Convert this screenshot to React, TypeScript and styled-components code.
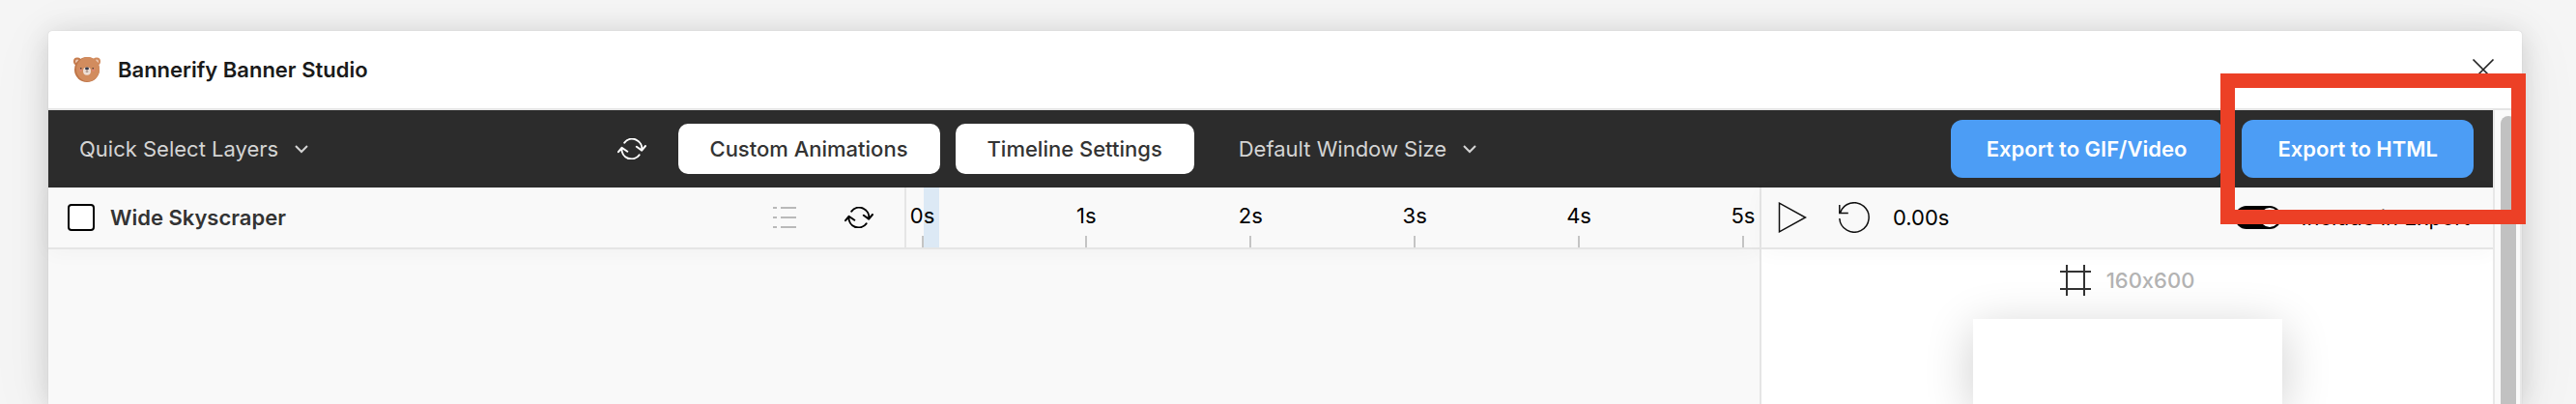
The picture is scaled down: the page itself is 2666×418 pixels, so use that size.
import React from "react";
import styled, { createGlobalStyle, css } from "styled-components";

const GlobalStyle = createGlobalStyle`
  *, *::before, *::after { box-sizing: border-box; }
  body {
    margin: 0;
    background: #f5f5f5;
    color: #000;
    font: 400 22px/32px Inter, "Liberation Sans", sans-serif;
    font-feature-settings: "calt" 0;
    overflow: hidden;
  }
  button, input, select { font: inherit; font-feature-settings: inherit; color: inherit; margin: 0; }
`;

const Page = styled.div`
  min-height: 100vh;
  padding: 32px 56px 0 50px;
  display: flex;
`;

const Window = styled.main`
  position: relative;
  flex: 1;
  min-width: 0;
  display: flex;
  flex-direction: column;
  background: #fff;
  border-radius: 4px 4px 0 0;
  box-shadow: 0 0 1px rgba(0, 0, 0, 0.2), 0 4px 30px rgba(0, 0, 0, 0.15),
    0 10px 70px rgba(0, 0, 0, 0.06);
`;

const TitleBar = styled.header`
  display: flex;
  align-items: center;
  gap: 18px;
  height: 82px;
  padding: 0 20px 0 26px;
  border-bottom: 2px solid #e5e5e5;
`;

const Title = styled.h1`
  flex: 1;
  margin: 0;
  font-size: 22px;
  font-weight: 600;
  color: #1a1a1a;
`;

const IconButton = styled.button`
  display: inline-flex;
  align-items: center;
  justify-content: center;
  width: 40px;
  height: 40px;
  padding: 0;
  border: 0;
  background: none;
  cursor: pointer;
  svg { flex: none; }
`;

const Content = styled.div`
  flex: 1;
  display: flex;
`;

const Studio = styled.div`
  flex: 1;
  min-width: 0;
  display: flex;
  flex-direction: column;
`;

const Scrollbar = styled.div`
  width: 30px;
  padding: 6px 4px 0 6px;
  border: solid #e8e8e8;
  border-width: 0 2px;
  background: #fafafa;
  display: flex;
`;

const ScrollThumb = styled.div`
  width: 16px;
  border-radius: 8px 8px 0 0;
  background: #c1c1c1;
`;

const Toolbar = styled.div`
  display: flex;
  align-items: center;
  height: 80px;
  padding-right: 20px;
  background: #2c2c2c;
  color: #d4d4d4;
`;

const LayerTools = styled.div`
  flex: 0 0 25%;
  display: flex;
  align-items: center;
  justify-content: space-between;
  padding: 0 4px 0 32px;
  color: #fff;
`;

const ButtonGroup = styled.div<{ $gap: number }>`
  display: flex;
  gap: ${(p) => p.$gap}px;
`;

const CenterTools = styled.div`
  flex: 1;
  display: flex;
  align-items: center;
  gap: 46px;
  padding-left: 24px;
`;

const ToolButton = styled.button<{ $primary?: boolean }>`
  border: 0;
  white-space: nowrap;
  cursor: pointer;
  ${(p) =>
    p.$primary
      ? css`
          height: 60px;
          padding: 0 37px;
          border-radius: 12px;
          background: #4c9df5;
          color: #fff;
          font-weight: 600;
        `
      : css`
          height: 52px;
          padding: 0 33px;
          border-radius: 10px;
          background: #fff;
          color: #333;
          font-weight: 500;
        `}
`;

const DropdownWrap = styled.label`
  display: flex;
  align-items: center;
  color: #d4d4d4;
  svg { margin-left: -14px; pointer-events: none; }
`;

const DropdownSelect = styled.select`
  appearance: none;
  border: 0;
  padding: 0 30px 0 0;
  background: none;
  cursor: pointer;
`;

const Spacer = styled.div`
  flex: 1;
`;

const Columns = styled.div`
  flex: 1;
  display: grid;
  grid-template-columns: 7fr 3fr;
`;

const Panel = styled.section<{ $preview?: boolean }>`
  display: flex;
  flex-direction: column;
  background: ${(p) => (p.$preview ? "#fff" : "#f9f9f9")};
  border-left: ${(p) => (p.$preview ? "2px solid #e5e5e5" : "0")};
`;

const PanelHead = styled.div<{ $columns: string }>`
  display: grid;
  grid-template-columns: ${(p) => p.$columns};
  height: 64px;
  background: #f9f9f9;
  border-bottom: 2px solid #e5e5e5;
  box-shadow: 0 4px 20px rgba(0, 0, 0, 0.03);
`;

const LayerHead = styled.div`
  display: flex;
  align-items: center;
  padding: 0 27px 0 20px;
`;

const CheckLabel = styled.label`
  display: flex;
  align-items: center;
  gap: 16px;
  flex: 1;
  font-weight: 600;
  color: #333;
`;

const Checkbox = styled.input`
  appearance: none;
  width: 28px;
  height: 28px;
  border: 2px solid #000;
  border-radius: 4px;
  background: #fff;
`;

const Timeline = styled.ol`
  position: relative;
  display: flex;
  justify-content: space-between;
  margin: 0;
  padding: 0;
  list-style: none;
  border-left: 2px solid #e5e5e5;
`;

const Playhead = styled.li`
  position: absolute;
  top: 0;
  bottom: 0;
  left: 18px;
  width: 16px;
  background: #dce9f5;
`;

const Mark = styled.li`
  position: relative;
  width: 34px;
  display: flex;
  flex-direction: column;
  align-items: center;
  justify-content: space-between;
  padding-top: 13px;
  &::after {
    content: "";
    width: 2px;
    height: 12px;
    background: #c4c4c4;
  }
`;

const PreviewHead = styled.div`
  display: flex;
  align-items: center;
  padding: 0 24px 0 12px;
`;

const Time = styled.output`
  margin-left: 20px;
`;

const SwitchLabel = styled.label`
  display: flex;
  align-items: center;
  gap: 20px;
`;

const Switch = styled.input`
  appearance: none;
  display: flex;
  justify-content: flex-end;
  width: 48px;
  height: 24px;
  padding: 2px;
  border-radius: 12px;
  background: #000;
  &::before {
    content: "";
    width: 20px;
    height: 20px;
    border-radius: 50%;
    background: #fff;
  }
`;

const Preview = styled.div`
  flex: 1;
  display: flex;
  flex-direction: column;
  align-items: center;
  gap: 24px;
  padding-top: 16px;
`;

const SizeLabel = styled.div`
  display: flex;
  align-items: center;
  gap: 16px;
  color: #b3b3b3;
  font-weight: 500;
`;

const Banner = styled.div`
  flex: 1;
  width: 320px;
  max-width: 100%;
  background: #fff;
  box-shadow: 0 10px 50px rgba(0, 0, 0, 0.2);
`;

const Highlight = styled.div`
  position: absolute;
  top: 44px;
  right: -4px;
  width: 316px;
  height: 156px;
  border: 15px solid #ec4026;
  pointer-events: none;
`;

const Bear = () => (
  <svg width="28" height="28" viewBox="0 0 28 28" aria-hidden="true">
    <circle cx="4" cy="5.5" r="4" fill="#c67c4e" />
    <circle cx="24" cy="5.5" r="4" fill="#d18a5c" />
    <circle cx="4" cy="5.5" r="2" fill="#ecc9b4" />
    <circle cx="24" cy="5.5" r="2" fill="#ecc9b4" />
    <circle cx="14" cy="14" r="13" fill="#bf7548" />
    <ellipse cx="15" cy="13.6" rx="12" ry="12.6" fill="#d28c5e" />
    <circle cx="7.3" cy="14.6" r="1.5" fill="#dd8672" />
    <circle cx="20.7" cy="14.6" r="1.5" fill="#dd8672" />
    <circle cx="7.8" cy="12.8" r="0.8" fill="#3c3432" />
    <circle cx="20.2" cy="12.8" r="0.8" fill="#3c3432" />
    <ellipse cx="14" cy="15.6" rx="4" ry="4.2" fill="#eedfd6" />
    <ellipse cx="14" cy="12.9" rx="2" ry="1.3" fill="#34394a" />
    <path d="M14 14v2M12.6 16q1.4 1 2.8 0" fill="none" stroke="#8d7770" strokeWidth="0.8" />
  </svg>
);

const Close = () => (
  <svg width="24" height="24" viewBox="0 0 24 24" stroke="#222" strokeWidth="1.7">
    <path d="M1.5 1.5l21 21M22.5 1.5l-21 21" />
  </svg>
);

const Chevron = () => (
  <svg width="14" height="10" viewBox="0 0 14 10" fill="none" stroke="currentColor" strokeWidth="2">
    <path d="M1 2l6 6 6-6" />
  </svg>
);

const Refresh = () => (
  <svg
    width="30"
    height="22"
    viewBox="0 0 30 22"
    fill="none"
    stroke="currentColor"
    strokeWidth="2"
    strokeLinecap="round"
    strokeLinejoin="round"
  >
    <path d="M7.3 4.6A10.1 10.1 0 0 1 25.2 12.4M19.8 8.8l5.4 3.8 3.8-4.6" />
    <path d="M22.6 17.4A10.1 10.1 0 0 1 4.5 10.2M1 14.2l3.5-4.4 5.8 4" />
  </svg>
);

const ListIcon = () => (
  <svg width="24" height="22" viewBox="0 0 24 22" fill="#b9b9b9">
    <path d="M0 0h4v2H0zM8 0h16v2H8zM0 10h4v2H0zM8 10h16v2H8zM0 20h4v2H0zM8 20h16v2H8z" />
  </svg>
);

const Play = () => (
  <svg width="30" height="32" viewBox="0 0 30 32" fill="none" stroke="#111" strokeWidth="1.5">
    <path d="M1.5 1.2v29.6L28.5 16z" />
  </svg>
);

const Restart = () => (
  <svg width="32" height="32" viewBox="0 0 32 32" fill="none" stroke="#111" strokeWidth="1.5">
    <path d="M.8 17A15.2 15.2 0 1 0 1.5 11.3M.8 3v8.4h9" />
  </svg>
);

const FrameIcon = () => (
  <svg width="32" height="32" viewBox="0 0 32 32" stroke="#333" strokeWidth="2">
    <path d="M7 0v32M25 0v32M0 7h32M0 25h32" />
  </svg>
);

const Dropdown = ({ label }: { label: string }) => (
  <DropdownWrap>
    <DropdownSelect aria-label={label}>
      <option>{label}</option>
    </DropdownSelect>
    <Chevron />
  </DropdownWrap>
);

const SECONDS = [0, 1, 2, 3, 4, 5];

export default function App() {
  return (
    <>
      <GlobalStyle />
      <Page>
        <Window>
          <TitleBar>
            <Bear />
            <Title>Bannerify Banner Studio</Title>
            <IconButton type="button" aria-label="Close">
              <Close />
            </IconButton>
          </TitleBar>
          <Content>
            <Studio>
              <Toolbar>
                <LayerTools>
                  <Dropdown label="Quick Select Layers" />
                  <IconButton type="button" aria-label="Refresh layers">
                    <Refresh />
                  </IconButton>
                </LayerTools>
                <CenterTools>
                  <ButtonGroup $gap={16}>
                    <ToolButton type="button">Custom Animations</ToolButton>
                    <ToolButton type="button">Timeline Settings</ToolButton>
                  </ButtonGroup>
                  <Dropdown label="Default Window Size" />
                </CenterTools>
                <ButtonGroup $gap={20}>
                  <ToolButton type="button" $primary>
                    Export to GIF/Video
                  </ToolButton>
                  <ToolButton type="button" $primary>
                    Export to HTML
                  </ToolButton>
                </ButtonGroup>
              </Toolbar>
              <Columns>
                <Panel>
                  <PanelHead $columns="1fr 1fr">
                    <LayerHead>
                      <CheckLabel>
                        <Checkbox type="checkbox" />
                        Wide Skyscraper
                      </CheckLabel>
                      <ButtonGroup $gap={37}>
                        <IconButton type="button" aria-label="List layers">
                          <ListIcon />
                        </IconButton>
                        <IconButton type="button" aria-label="Refresh banner">
                          <Refresh />
                        </IconButton>
                      </ButtonGroup>
                    </LayerHead>
                    <Timeline>
                      <Playhead aria-hidden="true" />
                      {SECONDS.map((s) => (
                        <Mark key={s}>{s}s</Mark>
                      ))}
                    </Timeline>
                  </PanelHead>
                </Panel>
                <Panel $preview>
                  <PanelHead $columns="1fr">
                    <PreviewHead>
                      <ButtonGroup $gap={24}>
                        <IconButton type="button" aria-label="Play">
                          <Play />
                        </IconButton>
                        <IconButton type="button" aria-label="Restart">
                          <Restart />
                        </IconButton>
                      </ButtonGroup>
                      <Time>0.00s</Time>
                      <Spacer />
                      <SwitchLabel>
                        <Switch type="checkbox" role="switch" defaultChecked />
                        Include in Export
                      </SwitchLabel>
                    </PreviewHead>
                  </PanelHead>
                  <Preview>
                    <SizeLabel>
                      <FrameIcon />
                      160x600
                    </SizeLabel>
                    <Banner />
                  </Preview>
                </Panel>
              </Columns>
            </Studio>
            <Scrollbar>
              <ScrollThumb />
            </Scrollbar>
          </Content>
          <Highlight />
        </Window>
      </Page>
    </>
  );
}
